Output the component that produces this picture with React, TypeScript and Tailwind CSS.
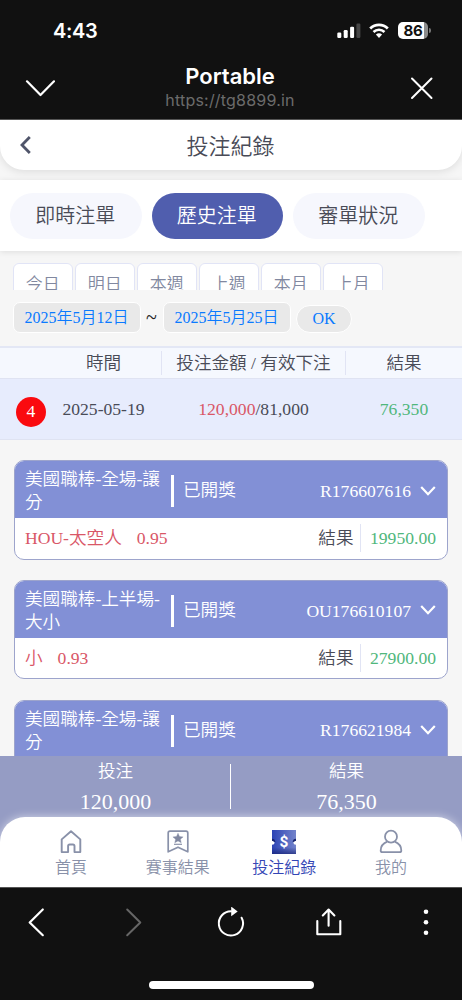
import React from "react";

const chips = ["今日", "明日", "本週", "上週", "本月", "上月"];

type Bet = { title: string; id: string; pick: string; odds: string; result: string };

const bets: Bet[] = [
  { title: "美國職棒-全場-讓分", id: "R176607616", pick: "HOU-太空人", odds: "0.95", result: "19950.00" },
  { title: "美國職棒-上半場-大小", id: "OU176610107", pick: "小", odds: "0.93", result: "27900.00" },
  { title: "美國職棒-全場-讓分", id: "R176621984", pick: "", odds: "", result: "" },
];

function StatusBar() {
  return (
    <div className="flex h-[60px] shrink-0 items-center pl-[53px] pr-[31px] font-['Inter','Liberation_Sans',sans-serif] text-white">
      <span className="mt-[2px] text-[20px] leading-[24px] font-semibold tracking-[-0.3px]">4:43</span>
      <div className="ml-auto mt-[1px] flex items-center">
        <svg className="h-[16px] w-[24px]" viewBox="0 0 24 16" fill="#fff">
          <rect x="0.3" y="9.5" width="4" height="5.5" rx="1.2" />
          <rect x="6.7" y="7" width="4" height="8" rx="1.2" />
          <rect x="13.1" y="3.8" width="4" height="11.2" rx="1.2" />
          <rect x="19.4" y="0.5" width="4" height="14.5" rx="1.2" fill="#454545" />
        </svg>
        <svg className="ml-[8px] h-[16px] w-[20px]" viewBox="0 0 20 16">
          <path d="M1.2 5.4a12.6 12.6 0 0 1 17.6 0" fill="none" stroke="#fff" strokeWidth="2.8" />
          <path d="M4.5 9a7.9 7.9 0 0 1 11 0" fill="none" stroke="#fff" strokeWidth="2.6" />
          <path d="M6.9 11.6a4.5 4.5 0 0 1 6.2 0L10 14.9z" fill="#fff" />
        </svg>
        <div className="ml-[9px] flex h-[17px] w-[30px] items-center justify-center rounded-[5px] bg-linear-to-r from-white from-86% to-[#8c8c8c] to-86% text-[15px] leading-[17px] font-bold tracking-[-0.3px] text-[#111]">
          86
        </div>
        <div className="ml-[1px] h-[5px] w-[2px] rounded-r-full bg-[#777]" />
      </div>
    </div>
  );
}

function TitleBar() {
  return (
    <div className="flex h-[60px] shrink-0 items-center border-b border-[#555] pr-[28px] pb-[4px] pl-[25px] font-['Inter','Liberation_Sans',sans-serif]">
      <svg className="h-[18px] w-[30px]" viewBox="0 0 30 18" fill="none" stroke="#fff" strokeWidth="2.2" strokeLinecap="round" strokeLinejoin="round">
        <path d="M2 2.3 15.5 16 29 2.3" />
      </svg>
      <div className="-mt-px flex flex-1 flex-col items-center pr-[5px]">
        <span className="text-[22px] leading-[26px] font-semibold text-white">Portable</span>
        <span className="text-[16px] leading-[22px] font-normal tracking-[0.2px] text-[#6b6b6b]">https://tg8899.in</span>
      </div>
      <svg className="h-[24px] w-[24px]" viewBox="0 0 24 24" stroke="#fff" strokeWidth="2" strokeLinecap="round">
        <path d="M2 2.5 21.5 22M21.5 2.5 2 22" />
      </svg>
    </div>
  );
}

function PageHeader() {
  return (
    <div className="relative z-10 flex h-[50px] shrink-0 items-center rounded-b-[24px] bg-white px-[20px] shadow-[0_2px_8px_rgba(0,0,0,0.1)]">
      <svg className="h-[20px] w-[12px]" viewBox="0 0 12 20" fill="none" stroke="#50556a" strokeWidth="2.8">
        <path d="M9.8 2 2 10l7.8 8" />
      </svg>
      <span className="mt-[3px] flex-1 pr-[13px] text-center text-[22px] leading-[30px] text-[#494b57]">投注紀錄</span>
    </div>
  );
}

function Tabs() {
  return (
    <div className="mt-[10px] flex h-[71px] shrink-0 gap-[10px] bg-white pt-[12.5px] pl-[10px] shadow-[0_1px_6px_rgba(0,0,0,0.1)]">
      {["即時注單", "歷史注單", "審單狀況"].map((t, i) => (
        <button
          key={t}
          className={
            "h-[46px] w-[131.5px] rounded-full pr-[1px] text-[20px] leading-[44px] " +
            (i === 1 ? "bg-[#505eae] text-white" : "bg-[#f6f7fd] text-[#494b57]")
          }
        >
          {t}
        </button>
      ))}
    </div>
  );
}

function Filters() {
  const date = "h-[31px] w-[128px] rounded-[7px] border-[1.5px] border-white bg-[#e9e9e9] text-center text-[16px] leading-[30px] text-[#0a7aff]";
  return (
    <>
      <div className="mt-[12px] flex h-[27px] shrink-0 gap-[1.5px] overflow-hidden pl-[12.5px]">
        {chips.map((c) => (
          <div key={c} className="h-[40px] w-[60.5px] shrink-0 rounded-[6px] border-[1.5px] border-[#e1e4f6] bg-white text-center text-[17px] leading-[41px] text-[#8188a0]">
            {c}
          </div>
        ))}
      </div>
      <div className="mt-[12px] flex h-[31px] shrink-0 items-end pl-[12.5px]">
        <div className={date}>2025年5月12日</div>
        <span className="w-[22px] text-center text-[20px] leading-[31px] text-[#222]">~</span>
        <div className={date}>2025年5月25日</div>
        <div className="ml-[5.5px] h-[28px] w-[56px] rounded-full border-[1.5px] border-white bg-[#e9e9e9] text-center text-[16px] leading-[25px] text-[#0a7aff]">
          OK
        </div>
      </div>
    </>
  );
}

function Table() {
  return (
    <div className="mt-[13px] shrink-0 text-[17.6px] text-[#494b57]">
      <div className="flex h-[32px] items-center border-t-2 border-[#e3e7f5] bg-[#f5f8fe] pb-[1px] pl-[46px] text-center leading-[24px]">
        <span className="w-[115px]">時間</span>
        <span className="w-[185px] border-x-[1.5px] border-[#e1e4f4]">投注金額 / 有效下注</span>
        <span className="flex-1">結果</span>
      </div>
      <div className="flex h-[62px] items-center border-y border-[#dfe3f2] bg-[#e7ecfd] text-center">
        <span className="mt-[5px] ml-[16px] h-[30px] w-[30px] rounded-full bg-[#fa0a0f] leading-[29px] text-white">4</span>
        <span className="mt-[1px] w-[115px]">2025-05-19</span>
        <span className="mt-[1px] w-[185px]"><span className="text-[#d95767]">120,000</span>/81,000</span>
        <span className="mt-[1px] flex-1 text-[#50b77c]">76,350</span>
      </div>
    </div>
  );
}

function BetCard({ bet }: { bet: Bet }) {
  return (
    <div className="h-[99.5px] shrink-0 overflow-hidden rounded-[10px] border-[1.5px] border-[#9da4cc] bg-white text-[17.6px]">
      <div className="flex h-[57px] items-center bg-[#8290d6] pr-[11px] pl-[10px] text-white">
        <span className="mt-[3px] w-[137px] leading-[23px]">{bet.title}</span>
        <span className="mt-[3px] ml-[9px] h-[32px] w-[3px] bg-white" />
        <span className="mt-[2px] ml-[9px]">已開獎</span>
        <span className="mt-[3px] ml-auto">{bet.id}</span>
        <svg className="mt-[2px] ml-[9px] h-[12px] w-[16px]" viewBox="0 0 16 12" fill="none" stroke="#fff" strokeWidth="2.2">
          <path d="M1.2 2 8 9.2 14.8 2" />
        </svg>
      </div>
      {bet.result && (
        <div className="flex h-[40px] items-center pr-[11px] pl-[10px] leading-[24px]">
          <span className="text-[#d95767]">{bet.pick}</span>
          <span className="ml-[15px] text-[#d95767]">{bet.odds}</span>
          <span className="ml-auto text-[#494b57]">結果</span>
          <span className="ml-[6px] h-[28px] w-[1.5px] bg-[#e1e4f4]" />
          <span className="ml-[9px] text-[#50b77c]">{bet.result}</span>
        </div>
      )}
    </div>
  );
}

function Summary() {
  return (
    <div className="flex h-[91px] shrink-0 bg-[#959cc4] text-white">
      {[["投注", "120,000"], ["結果", "76,350"]].map(([label, value], i) => (
        <div key={label} className="relative flex flex-1 flex-col items-center pt-[3px]">
          <span className="text-[17.6px] leading-[25px]">{label}</span>
          <span className="mt-[5px] text-[22px] leading-[26px]">{value}</span>
          {i === 1 && <span className="absolute top-[8px] left-[-1.5px] h-[45px] w-[1.5px] bg-white" />}
        </div>
      ))}
    </div>
  );
}

function BottomNav() {
  const item = "flex w-[106.7px] flex-col items-center text-[16px] leading-[24px] text-[#8991a9]";
  return (
    <div className="relative -mt-[30px] flex h-[70px] shrink-0 justify-center rounded-t-[25px] bg-white pt-[12px] shadow-[0_0_10px_rgba(255,255,255,0.6)]">
      <div className={item}>
        <svg className="mb-[2px] h-[25px] w-[24px]" viewBox="0 0 24 25" fill="none" stroke="#8991a9" strokeWidth="1.9" strokeLinejoin="round">
          <path d="M2.7 10.4 12 2.2l9.3 8.2v12.7h-5.8v-6q0-1.6-1.6-1.6h-3.2q-1.6 0-1.6 1.6v6H2.7z" />
        </svg>
        首頁
      </div>
      <div className={item}>
        <svg className="mb-[2px] h-[25px] w-[24px]" viewBox="0 0 24 25" fill="none" stroke="#8991a9" strokeWidth="1.7" strokeLinejoin="round">
          <path d="M4 2.2h16q1.8 0 1.8 1.8v18.8L12 18.2l-9.8 4.6V4q0-1.8 1.8-1.8z" />
          <path d="m12 4.2 1.5 3.3 3.6.4-2.7 2.3.8 3.5-3.2-1.8-3.2 1.8.8-3.5-2.7-2.3 3.6-.4z" fill="#8188a0" strokeWidth="0.4" />
          <path d="M8 15.3h8" strokeWidth="1.2" />
        </svg>
        賽事結果
      </div>
      <div className="flex w-[106.7px] flex-col items-center text-[16px] leading-[24px] text-[#3345b5]">
        <svg className="mb-[2px] h-[25px] w-[26px]" viewBox="0 0 26 25">
          <defs>
            <linearGradient id="ticket" x1="0" y1="0" x2="1" y2="0">
              <stop offset="0" stopColor="#2c43b5" />
              <stop offset="1" stopColor="#7484cb" />
            </linearGradient>
            <linearGradient id="shade" x1="0" y1="0" x2="0" y2="1">
              <stop offset="0.72" stopColor="#162273" stopOpacity="0" />
              <stop offset="1" stopColor="#162273" stopOpacity="0.7" />
            </linearGradient>
          </defs>
          <path d="M1 1h24v10.8q-2.6 0-2.6 2t2.6 2V25H1v-9.2q2.6 0 2.6-2t-2.6-2z" fill="url(#ticket)" />
          <path d="M1 1h24v10.8q-2.6 0-2.6 2t2.6 2V25H1v-9.2q2.6 0 2.6-2t-2.6-2z" fill="url(#shade)" />
          <path d="M1 9.8q3 0 3.4 3.4L1 11.8zM25 9.8q-3 0-3.4 3.4L25 11.8z" fill="#17236c" />
          <text x="13" y="18.4" textAnchor="middle" fontFamily="Roboto" fontSize="15.5" fontWeight="700" fill="#fff">$</text>
        </svg>
        投注紀錄
      </div>
      <div className={item}>
        <svg className="mb-[2px] h-[25px] w-[24px]" viewBox="0 0 24 25" fill="none" stroke="#8991a9" strokeWidth="1.8" strokeLinejoin="round">
          <circle cx="12" cy="7.7" r="6" />
          <path d="M8.2 12.6C4.2 14.2 1.7 17.7 1.7 21.5q0 1.7 1.7 1.7h17.2q1.7 0 1.7-1.7c0-3.8-2.5-7.3-6.5-8.9" />
        </svg>
        我的
      </div>
    </div>
  );
}

function BrowserBar() {
  return (
    <div className="flex h-[113px] shrink-0 flex-col items-center border-t border-[#555] bg-[#111]">
      <div className="flex w-full items-center pt-[19px] pl-[27px]">
        <svg className="h-[32px] w-[18px]" viewBox="0 0 18 32" fill="none" stroke="#fff" strokeWidth="2.2" strokeLinecap="round" strokeLinejoin="round">
          <path d="M15.8 2.5 2.7 15.5l13.1 12.7" />
        </svg>
        <svg className="ml-[79px] h-[32px] w-[18px]" viewBox="0 0 18 32" fill="none" stroke="#666" strokeWidth="2" strokeLinecap="round" strokeLinejoin="round">
          <path d="M3.2 2.5l13.1 13-13.1 12.7" />
        </svg>
        <svg className="ml-[74px] h-[32px] w-[30px]" viewBox="0 0 30 32" fill="none" stroke="#fff" strokeWidth="2">
          <path d="M15 4.3a12.1 12.1 0 1 0 10.6 6.4" strokeLinecap="round" />
          <path d="M15.2 -0.4v9.6l6.5-4.8z" fill="#fff" stroke="none" />
        </svg>
        <svg className="ml-[67px] h-[32px] w-[31px]" viewBox="0 0 31 32" fill="none" stroke="#fff" strokeWidth="2.1" strokeLinecap="round" strokeLinejoin="round">
          <path d="M4.3 14v13.2h23V14M15.6 18.8V2.8M9.8 8.4l5.8-5.8 5.8 5.8" />
        </svg>
        <svg className="ml-[78px] h-[32px] w-[8px]" viewBox="0 0 8 32" fill="#fff">
          <circle cx="4" cy="4.7" r="2.3" />
          <circle cx="4" cy="15.2" r="2.3" />
          <circle cx="4" cy="25.7" r="2.3" />
        </svg>
      </div>
      <div className="mt-[42px] h-[8px] w-[165px] rounded-full bg-white" />
    </div>
  );
}

export default function App() {
  return (
    <div className="flex h-[1000px] w-[462px] flex-col overflow-hidden bg-[#111] font-['Liberation_Serif','Noto_Sans_CJK_TC',serif] font-[350]">
      <StatusBar />
      <TitleBar />
      <div className="flex h-[767px] shrink-0 flex-col overflow-hidden bg-[#f6f6f6]">
        <div className="flex min-h-0 flex-1 flex-col overflow-hidden">
          <PageHeader />
          <Tabs />
          <Filters />
          <Table />
          <div className="mt-[20px] flex flex-col gap-[20.3px] px-[14px]">
            {bets.map((b) => (
              <BetCard key={b.id} bet={b} />
            ))}
          </div>
        </div>
        <Summary />
        <BottomNav />
      </div>
      <BrowserBar />
    </div>
  );
}
